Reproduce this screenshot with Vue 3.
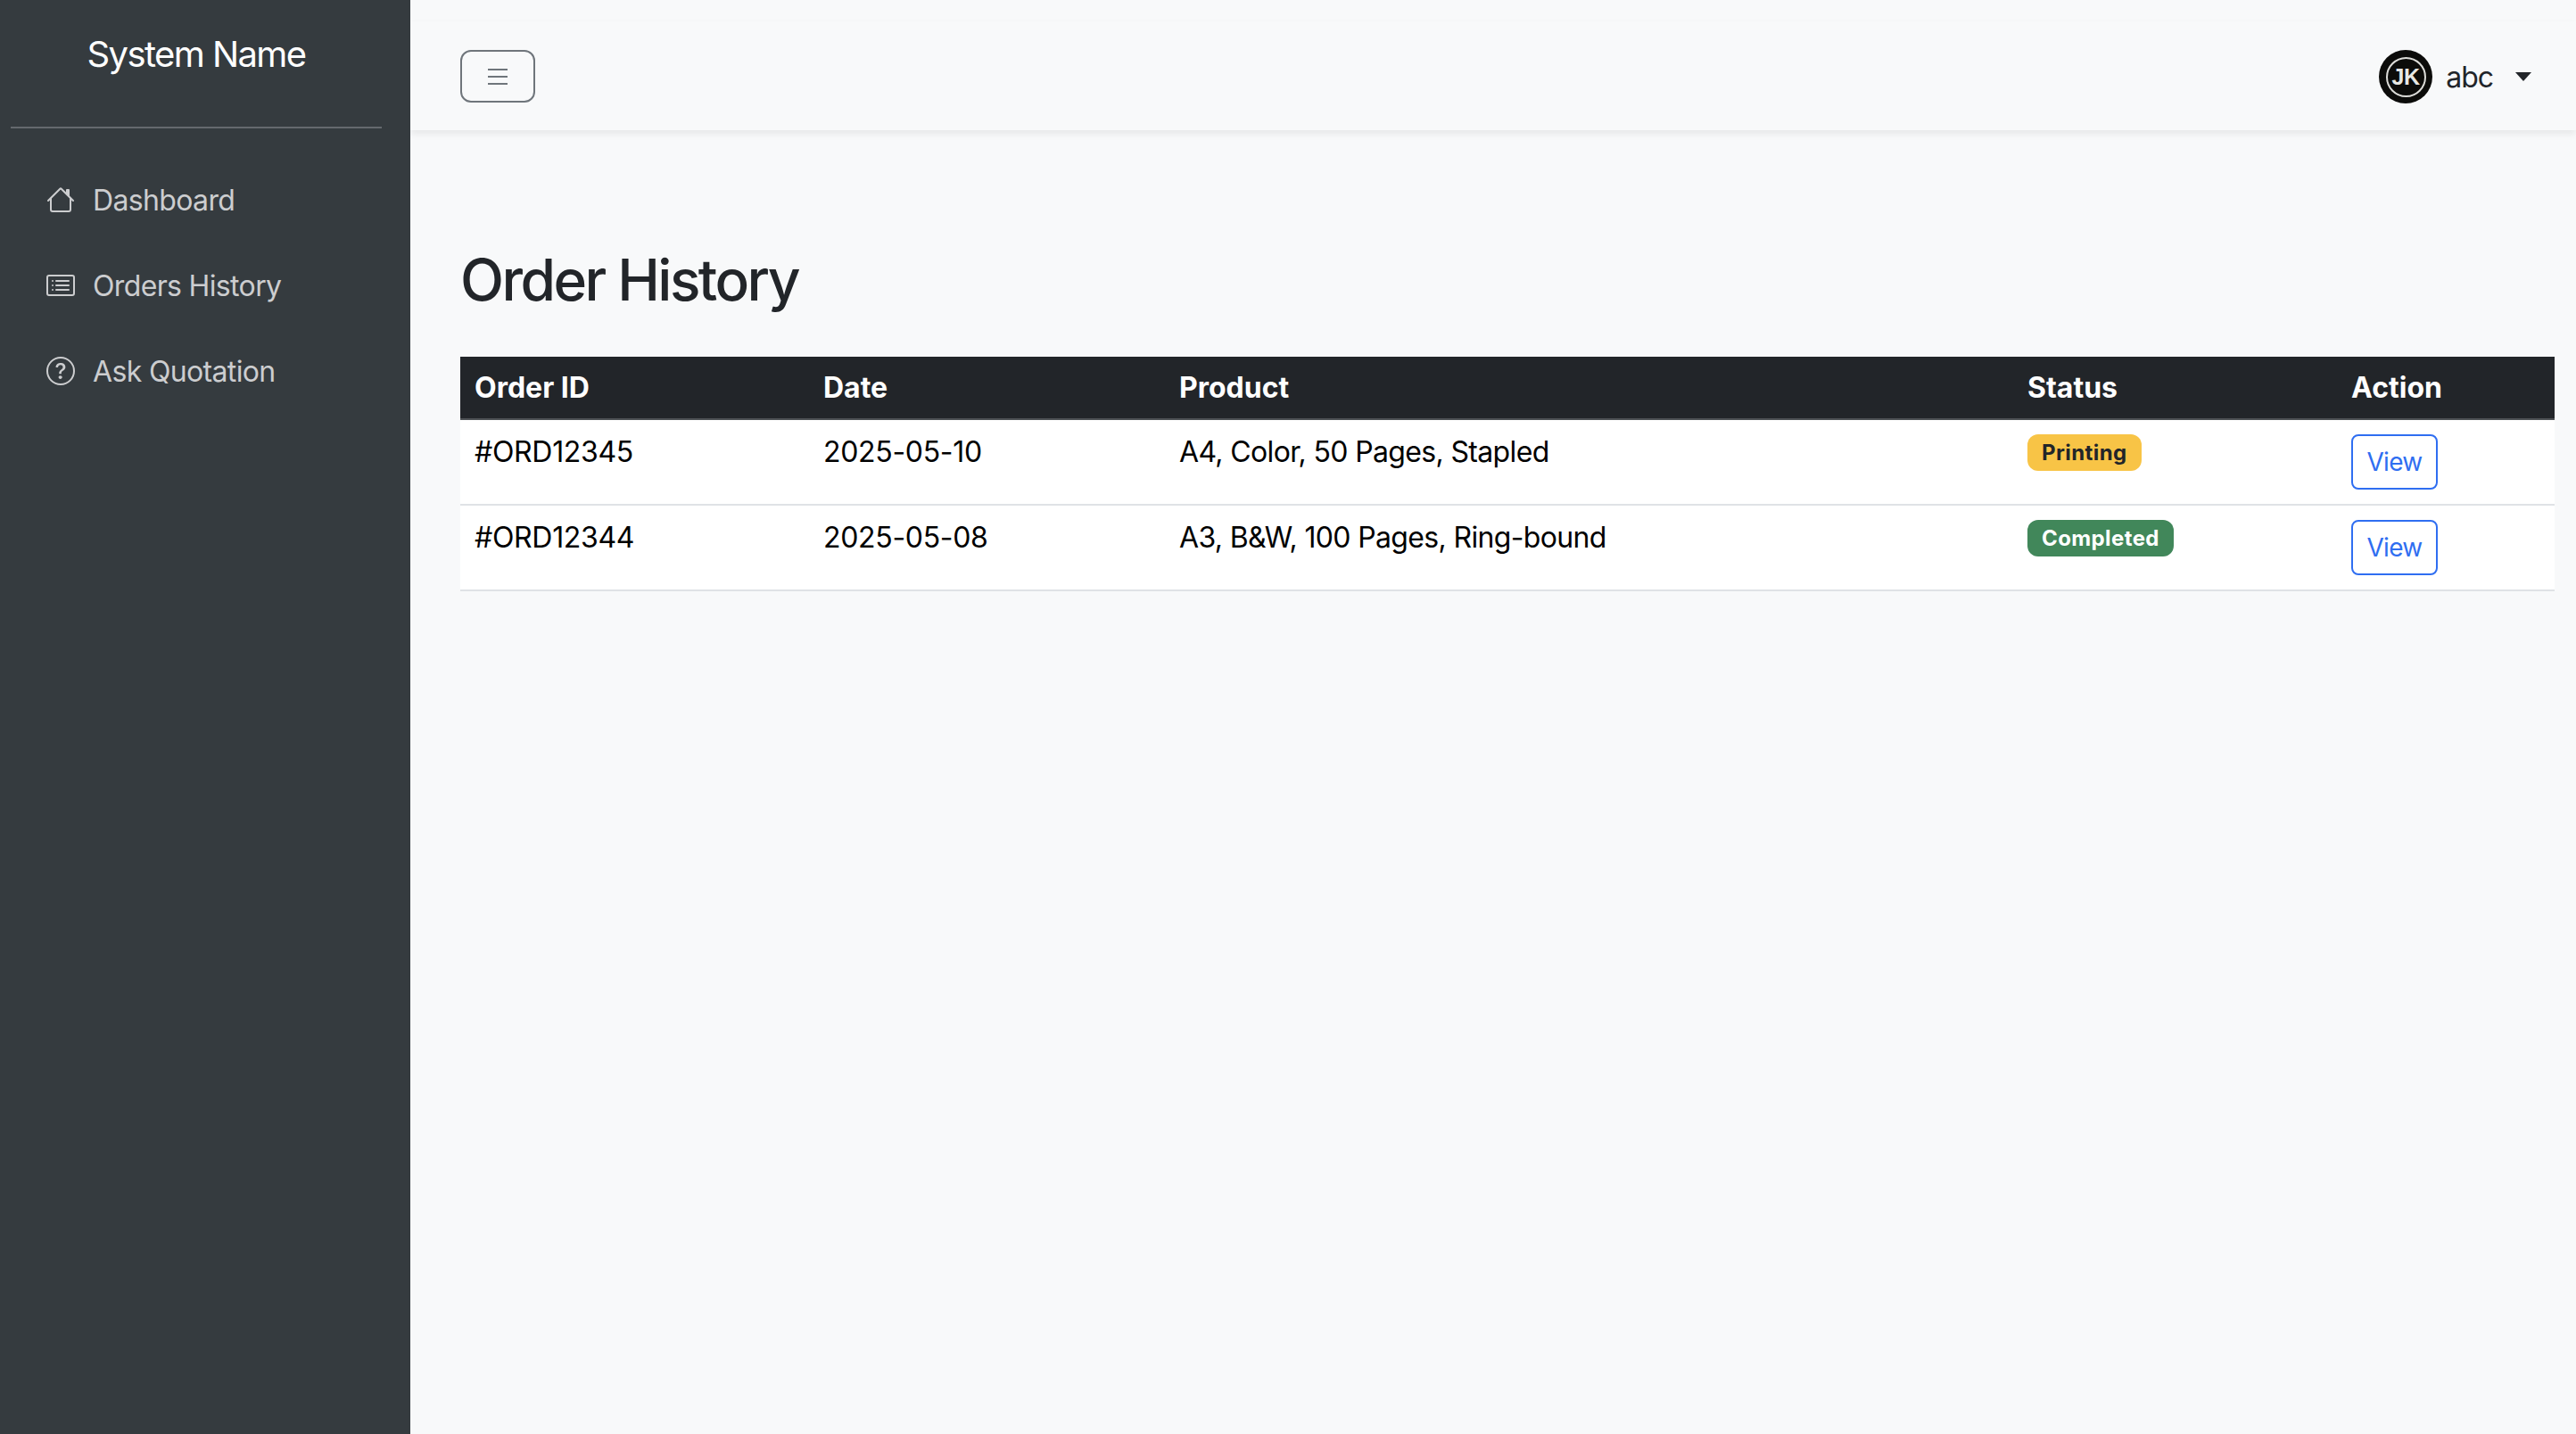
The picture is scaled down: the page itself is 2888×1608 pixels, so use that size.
<script setup>
const navItems = [
  {
    label: 'Dashboard',
    paths: [
      'M8.707 1.5a1 1 0 0 0-1.414 0L.646 8.146a.5.5 0 0 0 .708.708L2 8.207V13.5A1.5 1.5 0 0 0 3.5 15h9a1.5 1.5 0 0 0 1.5-1.5V8.207l.646.647a.5.5 0 0 0 .708-.708L13 5.793V2.5a.5.5 0 0 0-.5-.5h-1a.5.5 0 0 0-.5.5v1.293zM13 7.207V13.5a.5.5 0 0 1-.5.5h-9a.5.5 0 0 1-.5-.5V7.207l5-5z',
    ],
  },
  {
    label: 'Orders History',
    paths: [
      'M14.5 3a.5.5 0 0 1 .5.5v9a.5.5 0 0 1-.5.5h-13a.5.5 0 0 1-.5-.5v-9a.5.5 0 0 1 .5-.5zm-13-1A1.5 1.5 0 0 0 0 3.5v9A1.5 1.5 0 0 0 1.5 14h13a1.5 1.5 0 0 0 1.5-1.5v-9A1.5 1.5 0 0 0 14.5 2z',
      'M5 8a.5.5 0 0 1 .5-.5h7a.5.5 0 0 1 0 1h-7A.5.5 0 0 1 5 8m0-2.5a.5.5 0 0 1 .5-.5h7a.5.5 0 0 1 0 1h-7a.5.5 0 0 1-.5-.5m0 5a.5.5 0 0 1 .5-.5h7a.5.5 0 0 1 0 1h-7a.5.5 0 0 1-.5-.5m-1-5a.5.5 0 1 1-1 0 .5.5 0 0 1 1 0M4 8a.5.5 0 1 1-1 0 .5.5 0 0 1 1 0m0 2.5a.5.5 0 1 1-1 0 .5.5 0 0 1 1 0',
    ],
  },
  {
    label: 'Ask Quotation',
    paths: [
      'M8 15A7 7 0 1 1 8 1a7 7 0 0 1 0 14m0 1A8 8 0 1 0 8 0a8 8 0 0 0 0 16',
      'M5.255 5.786a.237.237 0 0 0 .241.247h.825c.138 0 .248-.113.266-.25.09-.656.54-1.134 1.342-1.134.686 0 1.314.343 1.314 1.168 0 .635-.374.927-.965 1.371-.673.489-1.206 1.06-1.168 1.987l.003.217a.25.25 0 0 0 .25.246h.811a.25.25 0 0 0 .25-.25v-.105c0-.718.273-.927 1.01-1.486.609-.463 1.244-.977 1.244-2.056 0-1.511-1.276-2.241-2.673-2.241-1.267 0-2.655.59-2.75 2.286m1.557 5.763c0 .533.425.927 1.01.927.609 0 1.028-.394 1.028-.927 0-.552-.42-.94-1.029-.94-.584 0-1.009.388-1.009.94',
    ],
  },
];

const orders = [
  { id: '#ORD12345', date: '2025-05-10', product: 'A4, Color, 50 Pages, Stapled', status: 'Printing', tone: 'warn' },
  { id: '#ORD12344', date: '2025-05-08', product: 'A3, B&W, 100 Pages, Ring-bound', status: 'Completed', tone: 'done' },
];
</script>

<template>
  <div class="page">
    <aside class="sidebar">
      <div class="brand">System Name</div>
      <hr class="divider" />
      <nav class="menu">
        <a v-for="item in navItems" :key="item.label" class="menu-link" href="#">
          <svg class="menu-icon" viewBox="0 0 16 16" fill="currentColor">
            <path v-for="d in item.paths" :key="d" :d="d" />
          </svg>
          {{ item.label }}
        </a>
      </nav>
    </aside>

    <div class="main">
      <header class="topbar">
        <button class="toggler" type="button" aria-label="Toggle menu">
          <svg viewBox="0 0 30 30" width="30" height="30">
            <path d="M4 7h22M4 15h22M4 23h22" stroke="#6f757b" stroke-width="2" fill="none" />
          </svg>
        </button>
        <div class="user">
          <span class="avatar"><span class="avatar-ring">JK</span></span>
          <span class="user-name">abc</span>
          <span class="caret"></span>
        </div>
      </header>

      <main class="content">
        <h2 class="title">Order History</h2>
        <table class="orders">
          <colgroup>
            <col class="c-id" />
            <col class="c-date" />
            <col class="c-product" />
            <col class="c-status" />
            <col class="c-action" />
          </colgroup>
          <thead>
            <tr>
              <th>Order ID</th>
              <th>Date</th>
              <th>Product</th>
              <th>Status</th>
              <th>Action</th>
            </tr>
          </thead>
          <tbody>
            <tr v-for="order in orders" :key="order.id">
              <td class="num">{{ order.id }}</td>
              <td class="num">{{ order.date }}</td>
              <td>{{ order.product }}</td>
              <td><span class="badge" :class="order.tone">{{ order.status }}</span></td>
              <td><a class="view-btn" href="#">View</a></td>
            </tr>
          </tbody>
        </table>
      </main>
    </div>
  </div>
</template>

<style>
html,
body {
  margin: 0;
  background: #f8f9fa;
}
</style>

<style scoped>
.page {
  display: flex;
  min-height: 100vh;
  font-family: Inter, "Liberation Sans", sans-serif;
  color: #222529;
  background: #f8f9fa;
}

/* sits above the topbar shadow */
.sidebar {
  position: relative;
  z-index: 1;
  flex: 0 0 460px;
  box-sizing: border-box;
  padding: 0 32px 0 12px;
  background: #353b3f;
  color: #fff;
}

.brand {
  padding-top: 37px;
  text-align: center;
  font-size: 40px;
  line-height: 48px;
  letter-spacing: -1.6px;
}

.divider {
  margin: 57px 0 32px;
  border: 0;
  border-top: 2px solid #65696e;
}

.menu {
  display: flex;
  flex-direction: column;
}

.menu-link {
  display: flex;
  align-items: center;
  gap: 20px;
  height: 96px;
  padding-left: 40px;
  font-size: 32px;
  letter-spacing: -0.65px;
  color: #cccdcf;
  text-decoration: none;
}

.menu-icon {
  width: 32px;
  height: 32px;
  flex: none;
}

.main {
  flex: 1;
  min-width: 0;
}

.topbar {
  display: flex;
  align-items: center;
  justify-content: space-between;
  box-sizing: border-box;
  height: 122px;
  margin-top: 24px;
  padding: 1px 50px 0 56px;
  background: #f8f9fa;
  box-shadow: 0 4px 8px rgba(0, 0, 0, 0.075);
}

.toggler {
  display: flex;
  align-items: center;
  justify-content: center;
  width: 84px;
  height: 59px;
  padding: 0;
  border: 2px solid #6f757b;
  border-radius: 12px;
  background: transparent;
}

.user {
  display: flex;
  align-items: center;
  margin-top: 1px;
  font-size: 32px;
}

.avatar {
  display: flex;
  align-items: center;
  justify-content: center;
  width: 60px;
  height: 60px;
  border-radius: 50%;
  background: #0c0c0a;
}

.avatar-ring {
  display: flex;
  align-items: center;
  justify-content: center;
  box-sizing: border-box;
  width: 45px;
  height: 45px;
  border: 2px solid #dcdcd8;
  border-radius: 50%;
  color: #e8e8e4;
  font-family: "Liberation Sans", sans-serif;
  font-size: 25px;
  font-weight: 700;
  letter-spacing: -0.4px;
}

.user-name {
  margin-left: 15px;
  letter-spacing: -1px;
}

.caret {
  width: 0;
  height: 0;
  margin-left: 25px;
  border-top: 10px solid #222529;
  border-left: 9px solid transparent;
  border-right: 9px solid transparent;
}

.content {
  padding: 129px 24px 0 56px;
}

.title {
  margin: 0 0 48px;
  font-size: 64px;
  font-weight: 500;
  line-height: 77px;
  letter-spacing: -2.55px;
}

.orders {
  width: 100%;
  table-layout: fixed;
  border-collapse: collapse;
  font-size: 32px;
  line-height: 40px;
  color: #000;
}

.c-id { width: 391px; }
.c-date { width: 399px; }
.c-product { width: 951px; }
.c-status { width: 363px; }
.c-action { width: 244px; }

.orders th {
  padding: 8px 16px;
  height: 70px;
  box-sizing: border-box;
  background: #222529;
  border-bottom: 2px solid #4d5154;
  color: #fff;
  font-weight: 700;
  text-align: left;
}

.orders td {
  height: 96px;
  box-sizing: border-box;
  padding: 16px;
  background: #fff;
  border-bottom: 2px solid #dfe2e6;
  vertical-align: top;
  letter-spacing: -0.65px;
}

.orders td.num {
  letter-spacing: -0.32px;
}

.badge {
  display: inline-block;
  padding: 8px 16px;
  border-radius: 12px;
  font-size: 24px;
  font-weight: 700;
  line-height: 25px;
  letter-spacing: 0.4px;
  vertical-align: top;
}

.badge.warn {
  background: #f8c446;
  color: #222529;
}

.badge.done {
  background: #41875a;
  color: #fff;
}

.view-btn {
  display: block;
  box-sizing: border-box;
  width: 97px;
  height: 62px;
  padding: 8px 0;
  border: 2px solid #2f6ef1;
  border-radius: 8px;
  background: #fff;
  color: #2f6ef1;
  font-size: 28px;
  line-height: 42px;
  letter-spacing: -0.7px;
  text-align: center;
  text-decoration: none;
}
</style>
